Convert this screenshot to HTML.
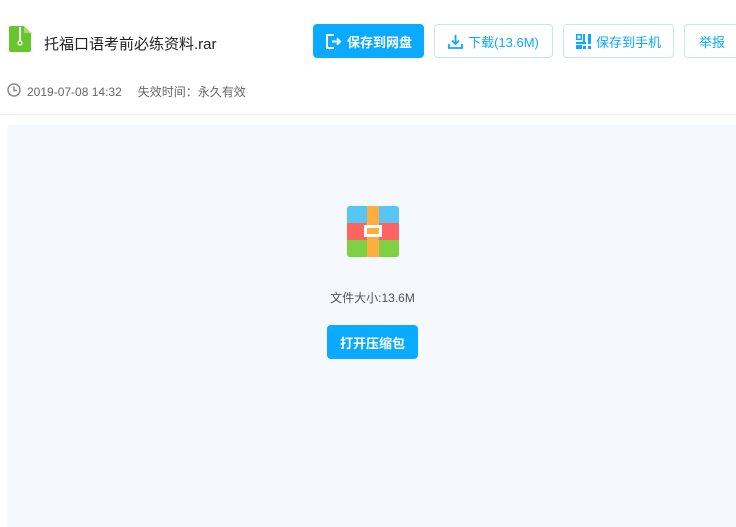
<!DOCTYPE html>
<html><head><meta charset="utf-8"><style>
*{margin:0;padding:0;box-sizing:border-box}
body{width:736px;height:527px;overflow:hidden;background:#fff;font-family:"Liberation Sans","Noto Sans CJK SC",sans-serif;position:relative}
.abs{position:absolute}
.title{left:44px;top:33px;font-size:15px;color:#222}
.meta{left:27px;top:83px;font-size:12px;color:#666}
.btn{position:absolute;top:24px;height:34px;border-radius:4px;font-size:13px;display:flex;align-items:center;justify-content:center;gap:5px}
.o{border:1px solid #c6e6f8;color:#09aaff;background:#fff}
.line{left:0;top:114px;width:736px;height:1px;background:#f0f0f0}
.panel{left:7px;top:125px;width:729px;height:402px;background:#f5f8fc;border-radius:4px 0 0 0}
</style></head><body>
<svg class="abs" style="left:9px;top:26px" width="22" height="26" viewBox="0 0 22 26"><path d="M2 0H15L22 7V24a2 2 0 0 1-2 2H2a2 2 0 0 1-2-2V2a2 2 0 0 1 2-2z" fill="#66c72c"/><path d="M15 0V7H22z" fill="#9ede74"/><rect x="10" y="1" width="2" height="14" fill="#fff"/><circle cx="11" cy="17" r="2" fill="none" stroke="#fff" stroke-width="1.3"/></svg>
<div class="abs title">托福口语考前必练资料.rar</div>
<svg class="abs" style="left:7px;top:83px" width="14" height="14" viewBox="0 0 14 14"><circle cx="7" cy="7" r="6" fill="none" stroke="#888" stroke-width="1.4"/><path d="M7 3.5V7.5H10" fill="none" stroke="#888" stroke-width="1.4"/></svg>
<div class="abs meta">2019-07-08 14:32<span style="margin-left:16px">失效时间：永久有效</span></div>
<div class="btn" style="left:313px;width:111px;background:#09aaff;color:#fff;font-weight:bold">
<svg width="17" height="17" viewBox="0 0 17 17"><path d="M9 2H2V15H9M7 8.5H15M12 5.5L15 8.5 12 11.5" fill="none" stroke="#fff" stroke-width="2"/></svg>保存到网盘</div>
<div class="btn o" style="left:434px;width:119px">
<svg width="15" height="15" viewBox="0 0 15 15"><path d="M7.5 1V10M4 6.5L7.5 10 11 6.5M1 10V14H14V10" fill="none" stroke="#09aaff" stroke-width="1.8"/></svg>下载(13.6M)</div>
<div class="btn o" style="left:563px;width:111px">
<svg width="15" height="15" viewBox="0 0 15 15" fill="#09aaff"><rect x="0" y="0" width="6" height="6"/><rect x="1.5" y="1.5" width="3" height="3" fill="#fff"/><rect x="7" y="0" width="2" height="8"/><rect x="12" y="0" width="3" height="10"/><rect x="0" y="8" width="10" height="2"/><rect x="0" y="11" width="6" height="4"/><rect x="7" y="12" width="3" height="3"/><rect x="12" y="12" width="3" height="3"/></svg>保存到手机</div>
<div class="btn o" style="left:684px;width:56px">举报</div>
<div class="abs line"></div>
<div class="abs panel"></div>
<svg class="abs" style="left:347px;top:206px" width="52" height="51" viewBox="0 0 52 51"><rect width="52" height="51" rx="3" fill="#58c6f5"/><rect y="17" width="52" height="17" fill="#fd6461"/><path d="M0 34H52V48a3 3 0 0 1-3 3H3a3 3 0 0 1-3-3z" fill="#80d043"/><rect x="20" y="0" width="12" height="51" fill="#fead3f"/><rect x="17" y="19" width="18" height="12" fill="#fff"/><rect x="20" y="22" width="12" height="6" fill="#fead3f"/></svg>
<div class="abs" style="left:0;width:745px;top:289px;text-align:center;font-size:12px;color:#555">文件大小:13.6M</div>
<div class="abs" style="left:327px;top:325px;width:91px;height:34px;background:#09aaff;border-radius:4px;color:#fff;font-size:13px;font-weight:bold;display:flex;align-items:center;justify-content:center">打开压缩包</div>
</body></html>
